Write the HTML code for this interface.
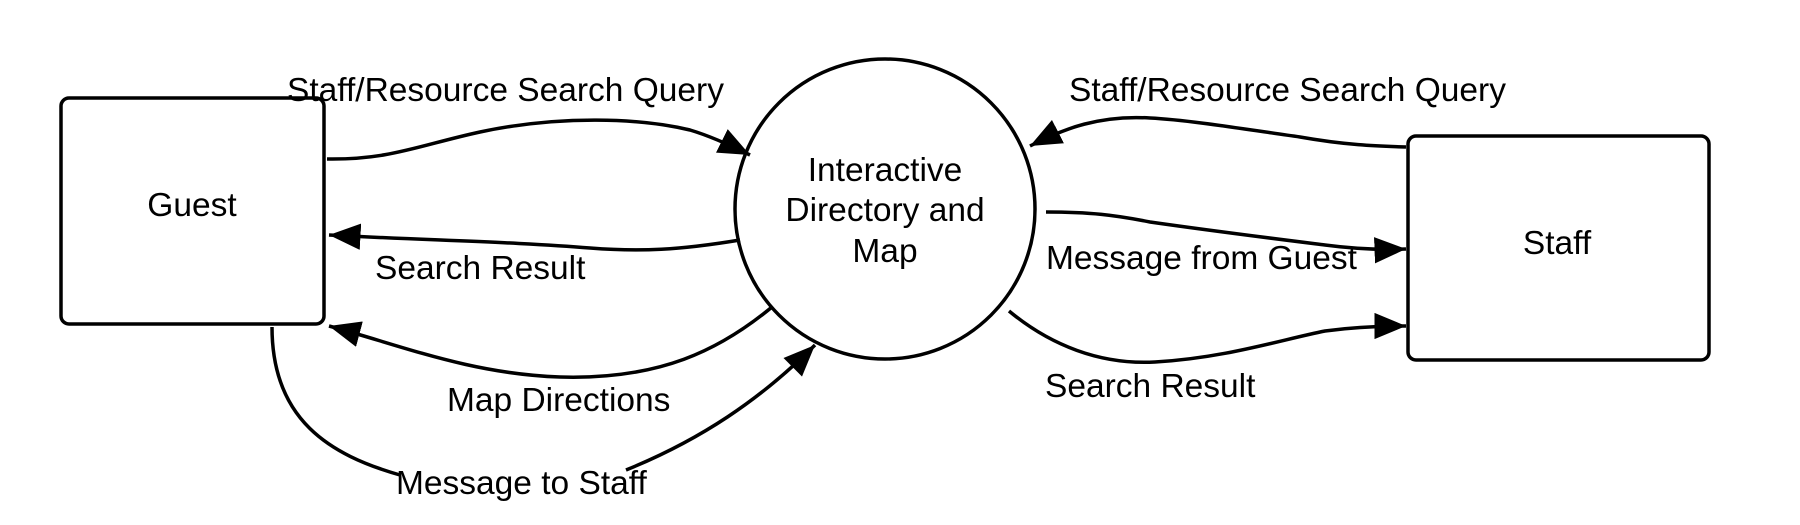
<!DOCTYPE html>
<html><head><meta charset="utf-8"><style>
html,body{margin:0;padding:0;background:#fff;width:1800px;height:525px;overflow:hidden}
svg{display:block}
text{font-family:"Liberation Sans",Arial,sans-serif;font-size:33.5px;fill:#000}
</style></head><body>
<svg width="1800" height="525" viewBox="0 0 1800 525">
<defs>
<marker id="a" viewBox="0 0 10 10" refX="10" refY="5" markerWidth="9" markerHeight="7.5" markerUnits="strokeWidth" orient="auto" preserveAspectRatio="none">
<path d="M0,0 L10,5 L0,10 z" fill="#000"/></marker>
</defs>
<g fill="none" stroke="#000" stroke-width="3.5">
<rect x="61" y="98" width="263" height="226" rx="8"/>
<circle cx="885" cy="209" r="150"/>
<rect x="1408" y="136" width="301" height="224" rx="8"/>
<path d="M327,159 C390,160 420,145 480,132 C560,115 640,118 690,130 C710,136 730,145 750,155" marker-end="url(#a)"/>
<path d="M740,240 C680,250 640,252 590,248 C520,242 420,240 329,235" marker-end="url(#a)"/>
<path d="M772,307 C720,350 660,380 560,377 C470,374 400,345 329,326" marker-end="url(#a)"/>
<path d="M272,327 C272,420 330,455 400,475 M626,470 C700,440 760,400 815,345" marker-end="url(#a)"/>
<path d="M1406,147 C1375,146 1345,145 1300,137 C1250,130 1190,120 1150,118 C1100,115 1065,128 1030,146" marker-end="url(#a)"/>
<path d="M1046,212 C1090,212 1115,215 1150,222 C1220,232 1285,240 1325,245 C1355,249 1380,250 1406,249" marker-end="url(#a)"/>
<path d="M1009,311 C1050,345 1100,365 1155,362 C1225,358 1280,340 1325,331 C1355,327 1380,326 1406,326" marker-end="url(#a)"/>
</g>
<text x="192" y="216" text-anchor="middle">Guest</text>
<text x="1557" y="254" text-anchor="middle">Staff</text>
<text x="885" y="181" text-anchor="middle">Interactive</text>
<text x="885" y="221" text-anchor="middle">Directory and</text>
<text x="885" y="262" text-anchor="middle">Map</text>
<text x="287" y="101">Staff/Resource Search Query</text>
<text x="1069" y="101">Staff/Resource Search Query</text>
<text x="375" y="279">Search Result</text>
<text x="1046" y="269">Message from Guest</text>
<text x="447" y="411">Map Directions</text>
<text x="1045" y="397">Search Result</text>
<text x="396" y="494">Message to Staff</text>
</svg>
</body></html>
